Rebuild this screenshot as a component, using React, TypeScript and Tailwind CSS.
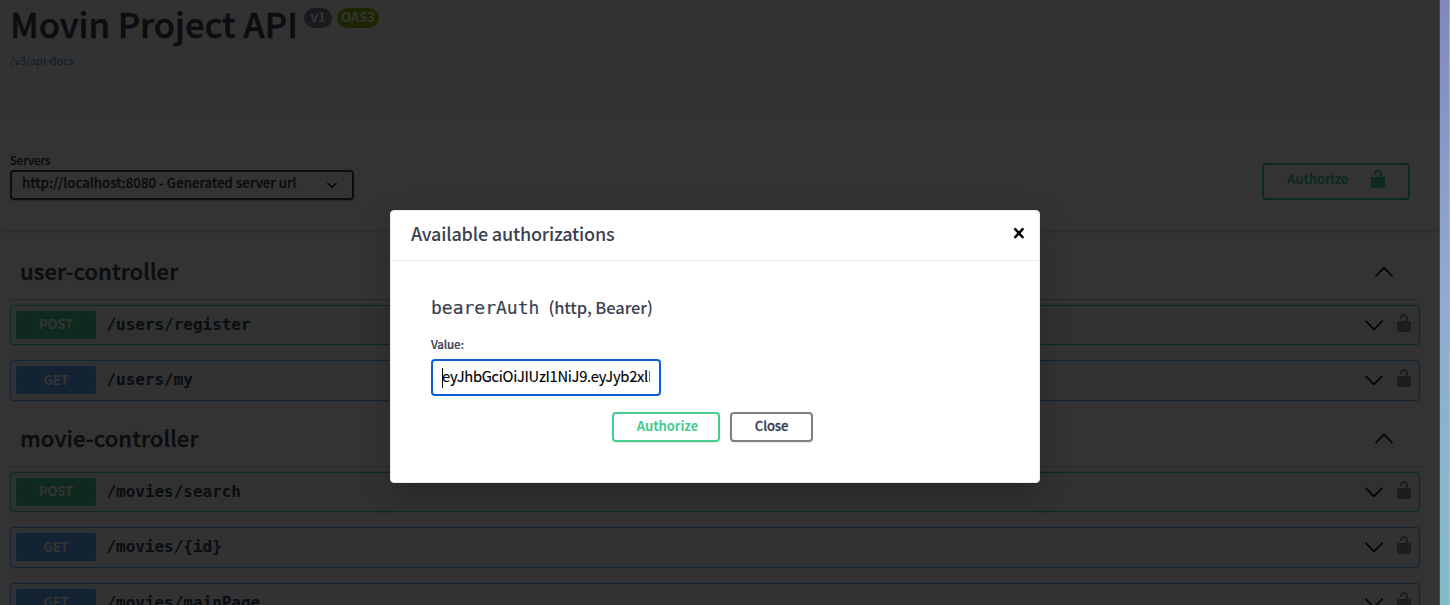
const sans = 'font-["Noto_Sans_CJK_KR",sans-serif]';
const mono = 'font-["DejaVu_Sans_Mono",monospace]';

type Method = "POST" | "GET";
type Operation = { method: Method; path: string };
type Controller = { name: string; operations: Operation[] };

const controllers: Controller[] = [
  {
    name: "user-controller",
    operations: [
      { method: "POST", path: "/users/register" },
      { method: "GET", path: "/users/my" },
    ],
  },
  {
    name: "movie-controller",
    operations: [
      { method: "POST", path: "/movies/search" },
      { method: "GET", path: "/movies/{id}" },
      { method: "GET", path: "/movies/mainPage" },
    ],
  },
];

function Chevron({ up = false }: { up?: boolean }) {
  return (
    <svg width="20" height="20" viewBox="0 0 20 20" fill="none" stroke="#000" strokeWidth="1.6" strokeLinecap="round" strokeLinejoin="round" className={up ? "rotate-180" : ""}>
      <path d="M2 6.2l8 8.2 8-8.2" />
    </svg>
  );
}

function Unlocked({ className }: { className: string }) {
  return (
    <svg width="20" height="20" viewBox="0 0 20 20" className={className} fill="currentColor">
      <path d="M15.8 8H14V5.6C14 2.703 12.665 1 10 1 7.334 1 6 2.703 6 5.6V6h2v-.801C8 3.754 8.797 3 10 3c1.203 0 2 .754 2 2.199V8H4c-.553 0-1 .646-1 1.199V17c0 .549.428 1.139.951 1.307l1.197.387C5.672 18.861 6.55 19 7.1 19h5.8c.549 0 1.428-.139 1.951-.307l1.196-.387c.524-.167.953-.757.953-1.306V9.199C17 8.646 16.352 8 15.8 8z" />
    </svg>
  );
}

function OperationRow({ method, path }: Operation) {
  const post = method === "POST";
  return (
    <div className={`flex h-[40.5px] shrink-0 items-center rounded border pl-[5px] pr-[5px] shadow-[0_0_3px_rgba(0,0,0,.19)] ${post ? "border-[#49cc90] bg-[#49cc90]/10" : "border-[#61affe] bg-[#61affe]/10"}`}>
      <span className={`flex h-7 w-20 items-center justify-center rounded-[3px] pb-[2px] text-[13px] font-bold leading-none tracking-[-0.1px] text-white ${post ? "bg-[#49cc90]" : "bg-[#61affe]"}`}>{method}</span>
      <span className={`${mono} ml-[10.5px] flex-1 text-[16px] font-bold tracking-[-0.03px] text-[#3b4151]`}>{path}</span>
      <Chevron />
      <Unlocked className="mb-[4px] ml-[10px] text-black opacity-40" />
    </div>
  );
}

function Page() {
  return (
    <div className="flex h-full w-[1440px] flex-col bg-white text-[#3b4151]">
      <header className="h-[120px] shrink-0 bg-[#fafafa] px-[10px]">
        <div className="flex h-[51.5px] items-start">
          <h1 className="mt-[3px] w-[287px] text-[34.5px] font-medium leading-[40px] whitespace-nowrap [-webkit-text-stroke:0.5px]">Movin Project API</h1>
          <span className="ml-[7px] mt-[8px] flex h-5 w-7 items-center justify-center rounded-full bg-[#7d8492] pb-[3px] text-[13px] font-bold leading-none text-white">v1</span>
          <span className="ml-[5px] mt-[8px] flex h-5 w-[42px] items-center justify-center rounded-full bg-[#89bf04] pb-[3px] text-[13px] font-bold leading-none text-white">OAS3</span>
        </div>
        <a className="block text-[11px] leading-[16px] tracking-[-0.05px] text-[#4990e2]">/v3/api-docs</a>
      </header>
      <section className="flex h-[110.5px] shrink-0 items-start justify-between border-b border-[#e8e8e8] pl-[10px] pr-[20px] shadow-[0_1px_2px_rgba(0,0,0,.15)]">
        <div className="pt-[31.5px]">
          <div className="h-[18px] text-[11.5px] font-medium leading-[16px] tracking-[-0.15px] [-webkit-text-stroke:0.25px]">Servers</div>
          <div className="flex h-[30px] w-[344px] items-center justify-between rounded border-2 border-[#41444e] pl-[10px] pr-[13px] text-[13.2px] font-medium shadow-[0_1px_2px_rgba(0,0,0,.25)]">
            <span className="pb-[4px] leading-none tracking-[0.06px] [-webkit-text-stroke:0.3px]">http://localhost:8080 - Generated server url</span>
            <svg width="14" height="14" viewBox="0 0 14 14" fill="none" stroke="#000" strokeWidth="1.5" strokeLinecap="round"><path d="M3 5.5l4 4 4-4" /></svg>
          </div>
        </div>
        <div className="mr-[10px] mt-[42.5px] flex h-[37px] w-[148px] items-center rounded border-2 border-[#49cc90] pl-[23px] text-[#49cc90]">
          <span className="pb-[5px] text-[13px] font-bold leading-none tracking-[-0.1px]">Authorize</span>
          <Unlocked className="mb-[4px] ml-auto mr-[20px]" />
        </div>
      </section>
      {controllers.map((c, i) => (
        <section key={c.name} className={`flex shrink-0 flex-col pl-[10px] pr-[20px] ${i === 0 ? "pt-[14px]" : "pt-[11px]"}`}>
          <div className="flex h-[55px] items-center justify-between border-b border-[#3b4151]/30 pl-[10px] pr-[26px]">
            <h2 className="pb-[3px] text-[22px] font-medium leading-none tracking-[0.12px] [-webkit-text-stroke:0.4px]">{c.name}</h2>
            <Chevron up />
          </div>
          <div className="flex flex-col gap-[15px] pt-[5px]">
            {c.operations.map((o) => <OperationRow key={o.path} {...o} />)}
          </div>
        </section>
      ))}
    </div>
  );
}

function AuthorizationDialog() {
  return (
    <div role="dialog" className="h-[273px] w-[650px] rounded border border-[#ebebeb] bg-white text-[#3b4151] shadow-[0_10px_30px_rgba(0,0,0,.2)]">
      <div className="flex h-[50px] items-center justify-between border-b border-[#ebebeb] pl-[20px] pr-[14px]">
        <h3 className="pb-[6px] text-[18px] font-medium leading-none tracking-[-0.18px]">Available authorizations</h3>
        <svg width="12" height="12" viewBox="0 0 12 12" fill="none" stroke="#000" strokeWidth="2.5" strokeLinecap="round" className="mb-[5px]"><path d="M2.2 2.2l7.4 8M9.6 2.2l-7.4 8" /></svg>
      </div>
      <div className="px-[40px] pt-[36px]">
        <h4 className="flex h-[22px] items-center text-[18px] leading-none">
          <code className={`${mono} font-normal [-webkit-text-stroke:0.2px]`}>bearerAuth</code>
          <span className="ml-[9px] pb-[2px] text-[16.5px] font-medium tracking-[-0.1px]">(http, Bearer)</span>
        </h4>
        <label className="mt-[17px] block h-[23px] text-[11.5px] font-medium leading-[16px] tracking-[-0.15px] [-webkit-text-stroke:0.2px]">Value:</label>
        <div className="flex h-[37px] w-[230px] items-center rounded border-2 border-[#0b5fd0] px-[9px] text-black">
          <span className="h-5 w-px shrink-0 bg-black" />
          <span className="-ml-px overflow-hidden whitespace-nowrap pb-[3px] text-[14.7px] leading-[20px] tracking-[-0.27px] [-webkit-text-stroke:0.15px]">eyJhbGciOiJIUzI1NiJ9.eyJyb2xlIjoi</span>
        </div>
        <div className="ml-[181px] mt-[15.5px] flex gap-[10px] text-[13px] font-bold leading-none tracking-[-0.1px]">
          <button className="h-[30px] w-[108px] rounded border-2 border-[#49cc90] pb-[3px] pl-[3px] text-[#49cc90] shadow-[0_1px_2px_rgba(0,0,0,.1)]">Authorize</button>
          <button className="h-[30px] w-[83px] rounded border-2 border-[#808080] pb-[3px] font-medium shadow-[0_1px_2px_rgba(0,0,0,.1)] [-webkit-text-stroke:0.3px]">Close</button>
        </div>
      </div>
    </div>
  );
}

export default function App() {
  return (
    <div className={`${sans} relative flex h-[605px] w-[1450px] overflow-hidden`}>
      <Page />
      <div className="w-[10px] border-r border-[#a9bfe0]/70 bg-gradient-to-b from-[#8088bb] via-[#91acd0] to-[#80bcc6]" />
      <div className="absolute inset-y-0 left-0 w-[1440px] border-r border-[#484848] bg-black/80 pl-[390px] pt-[210px]">
        <AuthorizationDialog />
      </div>
    </div>
  );
}
